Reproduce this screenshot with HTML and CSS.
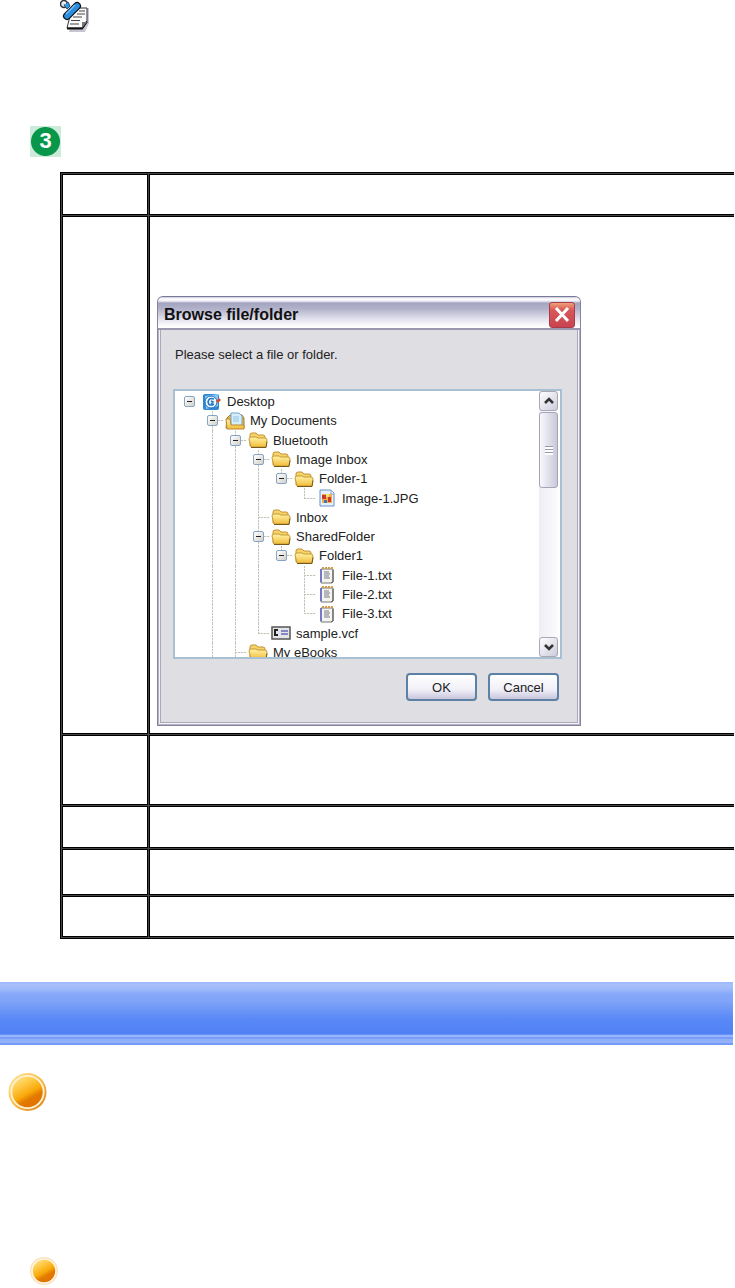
FILE: index.html
```
<!DOCTYPE html>
<html lang="en">
<head>
  <meta charset="UTF-8">
  <meta name="viewport" content="width=device-width, initial-scale=1.0">
  <title>Browse file/folder</title>
  <link rel="stylesheet" href="styles.css">
</head>
<body>
  <!-- shared tree icons -->
  <svg class="defs" width="0" height="0" aria-hidden="true">
    <defs>
      <linearGradient id="gold" x1="0" y1="0" x2="0" y2="1">
        <stop offset="0" stop-color="#fff3a8"/><stop offset="1" stop-color="#f1bd3a"/>
      </linearGradient>
      <linearGradient id="orb" x1="0.2" y1="0" x2="0.75" y2="1">
        <stop offset="0" stop-color="#ffe48c"/><stop offset="0.25" stop-color="#ffcc4c"/><stop offset="0.55" stop-color="#f9a90a"/><stop offset="0.7" stop-color="#e37a00"/><stop offset="1" stop-color="#dd7000"/>
      </linearGradient>
      <linearGradient id="rim" x1="0" y1="0" x2="1" y2="1">
        <stop offset="0" stop-color="#ffe8a0"/><stop offset="0.5" stop-color="#f8bd45"/><stop offset="1" stop-color="#d97a18"/>
      </linearGradient>
      <symbol id="folder" viewBox="0 0 20 18">
        <path d="M2 15V4q0-2 2-2h4l2 2h5q2 0 2 2v9z" fill="#f5d36a" stroke="#c39332"/>
        <path d="M3 16L1 8q0-2 2-2h5l2 1h7q2 0 2 2l-1 7z" fill="url(#gold)" stroke="#c99a35"/>
        <path d="M3 16.500h15l1-6" fill="none" stroke="#77591d"/>
      </symbol>
      <symbol id="text-file" viewBox="0 0 20 18">
        <path d="M4 3h12v13l-2 1H4z" fill="#f5f5f0" stroke="#777"/>
        <path d="M4 3v13" stroke="#7777c8" stroke-width="2"/>
        <path d="M5 2h11" stroke="#d49b48" stroke-width="2" stroke-dasharray="2 1"/>
        <path d="M7 6h5M7 8h6M7 10h5M7 12h6" stroke="#77798b"/>
        <path d="M16 4v12l-2 1" fill="none" stroke="#555"/>
      </symbol>
    </defs>
  </svg>

  <main class="page">
    <svg class="note-icon" viewBox="0 0 32 34" aria-hidden="true">
      <path d="M9 32l3-15 13-9h4v15l-4 9z" fill="#c6c5d2"/>
      <path d="M7 28l3-12L20 8h7v13l-4 7z" fill="#fafafa" stroke="#333"/>
      <path d="M19 11h6M17 14h8M13 17h9M11 20.500h9M10 24h9" stroke="#444" stroke-width="1.200"/>
      <path d="M7 28.500h15l5-7" fill="none" stroke="#111" stroke-width="2"/>
      <path d="M22 28v-6h5z" fill="#777"/>
      <path d="M7 16L17 6" stroke="#111" stroke-width="8" stroke-linecap="round"/>
      <path d="M7 16L17 6" stroke="#298de0" stroke-width="5.500" stroke-linecap="round"/>
      <path d="M6 14L15 5" stroke="#79c2fb" stroke-width="1.500"/>
      <circle cx="4" cy="4" r="3.500" fill="#d9e7f4" stroke="#333" stroke-width="1.500"/>
      <path d="M4 5l4-3 2 4-3 3z" fill="#3298e7" stroke="#244b72"/>
      <path d="M3 1l3 2-1 2z" fill="#fff"/>
    </svg>

    <div class="step">3</div>

    <table class="steps">
      <tr class="row-head"><td class="number"></td><td></td></tr>
      <tr class="row-dialog">
        <td class="number"></td>
        <td class="shot">
          <section class="dialog">
            <header class="titlebar">
              <h1>Browse file/folder</h1>
              <button class="close" type="button" aria-label="Close">
                <svg viewBox="0 0 24 24"><path d="M6 5l12 13M18 5L6 18" stroke="#fff" stroke-width="3"/></svg>
              </button>
            </header>
            <div class="dialog-body">
              <p>Please select a file or folder.</p>
              <div class="browser">
                <ul class="tree">
                  <li class="root"><span class="guide"><button class="toggle" type="button" aria-label="Collapse Desktop"></button></span>
                    <svg class="icon" viewBox="0 0 20 18"><rect x="1" y="1" width="16" height="16" rx="2" fill="#3186d4"/><path d="M3 3l13-2v12L4 16z" fill="#8bc7f3"/><circle cx="9" cy="9" r="6" fill="#e8f6ff" stroke="#2370b8"/><path d="M12 6q-5-2-6 3 1 5 6 2M9 8l2 1-2 2" fill="none" stroke="#2373bd" stroke-width="1.500"/><path d="M14 8l3-3 2 2-3 3z" fill="#d34e31"/></svg>Desktop</li>
                  <li><span class="guide tee"><button class="toggle" type="button" aria-label="Collapse My Documents"></button></span>
                    <svg class="icon" viewBox="0 0 20 18"><path d="M2 6l3-3h12l2 3v10H1z" fill="#e7b649" stroke="#ad792c"/><path d="M6 1h8l3 3v10H6z" fill="#d6eefc" stroke="#71a7ce"/><path d="M8 5h6M8 7h6M8 9h6" stroke="#91c5e7"/><path d="M1 7h4l1 6h13v4H2z" fill="url(#gold)" stroke="#bd8834"/></svg>My Documents</li>
                  <li><span class="guide line"></span><span class="guide tee"><button class="toggle" type="button" aria-label="Collapse Bluetooth"></button></span>
                    <svg class="icon"><use href="#folder"/></svg>Bluetooth</li>
                  <li><span class="guide line"></span><span class="guide line"></span><span class="guide tee"><button class="toggle" type="button" aria-label="Collapse Image Inbox"></button></span>
                    <svg class="icon"><use href="#folder"/></svg>Image Inbox</li>
                  <li><span class="guide line"></span><span class="guide line"></span><span class="guide line"></span><span class="guide elbow"><button class="toggle" type="button" aria-label="Collapse Folder-1"></button></span>
                    <svg class="icon"><use href="#folder"/></svg>Folder-1</li>
                  <li><span class="guide line"></span><span class="guide line"></span><span class="guide line"></span><span class="guide"></span><span class="guide elbow"></span>
                    <svg class="icon" viewBox="0 0 20 18"><path d="M3 1h11l3 3v13H3z" fill="#e5f0ff" stroke="#6a91c7"/><path d="M14 1v4h3" fill="#fff" stroke="#88a4ce"/><path d="M5 5h10v9H5z" fill="#f7ad47"/><path d="M5 6h4v4H5zM11 8h3v5h-3z" fill="#c93828"/><path d="M9 5h3v3H9z" fill="#fae283"/><path d="M7 11h3v3H7z" fill="#347bb9"/></svg>Image-1.JPG</li>
                  <li><span class="guide line"></span><span class="guide line"></span><span class="guide tee"></span>
                    <svg class="icon"><use href="#folder"/></svg>Inbox</li>
                  <li><span class="guide line"></span><span class="guide line"></span><span class="guide tee"><button class="toggle" type="button" aria-label="Collapse SharedFolder"></button></span>
                    <svg class="icon"><use href="#folder"/></svg>SharedFolder</li>
                  <li><span class="guide line"></span><span class="guide line"></span><span class="guide line"></span><span class="guide elbow"><button class="toggle" type="button" aria-label="Collapse Folder1"></button></span>
                    <svg class="icon"><use href="#folder"/></svg>Folder1</li>
                  <li><span class="guide line"></span><span class="guide line"></span><span class="guide line"></span><span class="guide"></span><span class="guide tee"></span>
                    <svg class="icon"><use href="#text-file"/></svg>File-1.txt</li>
                  <li><span class="guide line"></span><span class="guide line"></span><span class="guide line"></span><span class="guide"></span><span class="guide tee"></span>
                    <svg class="icon"><use href="#text-file"/></svg>File-2.txt</li>
                  <li><span class="guide line"></span><span class="guide line"></span><span class="guide line"></span><span class="guide"></span><span class="guide elbow"></span>
                    <svg class="icon"><use href="#text-file"/></svg>File-3.txt</li>
                  <li><span class="guide line"></span><span class="guide line"></span><span class="guide elbow"></span>
                    <svg class="icon" viewBox="0 0 20 18"><path d="M1 3h18v12H1z" fill="#e5e5e8" stroke="#555" stroke-width="1.500"/><path d="M7 6H4v5h3" fill="none" stroke="#222" stroke-width="2"/><path d="M10 7h7M10 10h7" stroke="#6868bd" stroke-width="1.500"/></svg>sample.vcf</li>
                  <li><span class="guide line"></span><span class="guide tee"></span>
                    <svg class="icon"><use href="#folder"/></svg>My eBooks</li>
                </ul>
                <div class="scrollbar">
                  <button class="arrow" type="button" aria-label="Scroll up"><svg viewBox="0 0 12 8"><path d="M2 6l4-4 4 4" fill="none" stroke="#333" stroke-width="2.500"/></svg></button>
                  <div class="thumb"></div>
                  <button class="arrow down" type="button" aria-label="Scroll down"><svg viewBox="0 0 12 8"><path d="M2 2l4 4 4-4" fill="none" stroke="#333" stroke-width="2.500"/></svg></button>
                </div>
              </div>
              <div class="actions">
                <button type="button">OK</button>
                <button type="button">Cancel</button>
              </div>
            </div>
          </section>
        </td>
      </tr>
      <tr class="row-tall"><td class="number"></td><td></td></tr>
      <tr class="row-short"><td class="number"></td><td></td></tr>
      <tr class="row-medium"><td class="number"></td><td></td></tr>
      <tr class="row-head"><td class="number"></td><td></td></tr>
    </table>

    <div class="banner"></div>

    <svg class="bullet large" viewBox="0 0 40 40" aria-hidden="true"><circle cx="20" cy="20" r="20" fill="url(#rim)"/><circle cx="20" cy="20" r="17" fill="url(#orb)" stroke="#fff0d0" stroke-width="2"/></svg>
    <svg class="bullet small" viewBox="0 0 40 40" aria-hidden="true"><circle cx="20" cy="20" r="20" fill="#fbe2bd"/><circle cx="20" cy="20" r="17" fill="url(#orb)" stroke="#fff7e8" stroke-width="2"/></svg>
  </main>
</body>
</html>
```

FILE: styles.css
```
* {
  box-sizing: border-box;
}

body {
  margin: 0;
  background: #fff;
  color: #222;
  font-family: "Liberation Sans", Arial, sans-serif;
  font-size: 13px;
}

button {
  padding: 0;
  font-family: inherit;
}

svg {
  display: block;
}

.defs {
  position: absolute;
}

.page {
  padding-bottom: 3px;
  overflow: hidden;
}

.note-icon {
  width: 32px;
  height: 34px;
  margin-left: 60px;
}

.step {
  width: 31px;
  height: 31px;
  margin: 92px 0 15px 30px;
  background: radial-gradient(circle, #08964b 14px, #cdebda 15px);
  color: #fff;
  font-size: 22px;
  font-weight: bold;
  line-height: 30px;
  text-align: center;
}

/* steps table, open on the right side */
.steps {
  width: calc(100% - 60px);
  margin-left: 60px;
  border: 1px solid #000;
  border-right: 0;
  border-spacing: 1px;
  background: #444;
  table-layout: fixed;
  clip-path: inset(0 1px 0 0);
}

.steps td {
  padding: 0;
  border: 1px solid #000;
  background: #fff;
  vertical-align: top;
}

.steps td:last-child {
  border-right: 0;
}

.steps .number {
  width: 86px;
}

.row-head {
  height: 41px;
}

.row-dialog {
  height: 518px;
}

.row-tall {
  height: 70px;
}

.row-short {
  height: 42px;
}

.row-medium {
  height: 46px;
}

.steps .shot {
  padding: 79px 7px 7px;
}

/* dialog */
.dialog {
  display: flex;
  flex-direction: column;
  max-width: 424px;
  height: 430px;
  border: 1px solid #85849b;
  border-top-color: #777a98;
  border-radius: 6px 6px 0 0;
  background: #dfdee3;
  box-shadow: inset 0 0 0 1px #b3b2c4, inset 0 0 0 2px #f4f4f8, inset 0 0 0 3px #aaa9bb;
}

.titlebar {
  display: flex;
  flex: none;
  align-items: center;
  justify-content: space-between;
  height: 33px;
  padding: 4px 5px 0 6px;
  border-bottom: 2px solid #9998b0;
  border-radius: 5px 5px 0 0;
  background: linear-gradient(#c9c8dc 0, #fff 2px, #eeeef6 4px, #a5a4c0 6px, #b3b2cb 12px, #e2e1ed 22px, #fff 30px);
}

.titlebar h1 {
  margin: 0;
  color: #111;
  font-size: 16px;
  line-height: 20px;
}

.close {
  width: 26px;
  height: 26px;
  border: 1px solid #aa3c48;
  border-radius: 3px;
  background: linear-gradient(#f1a077, #d85858 7px, #c94350);
}

.dialog-body {
  display: flex;
  flex: 1;
  flex-direction: column;
  padding: 17px 18px 0 15px;
}

.dialog-body p {
  margin: 0 0 26px;
  padding-left: 2px;
  line-height: 16px;
}

.browser {
  display: flex;
  height: 270px;
  padding-right: 2px;
  overflow: hidden;
  border: 2px solid #a9bfd2;
  background: #fff;
}

/* folder tree */
.tree {
  display: grid;
  flex: 1;
  grid-template-rows: repeat(14, 1fr);
  height: 271px;
  margin: 0;
  padding: 1px 0 0 3px;
  list-style: none;
}

.tree li {
  display: flex;
  align-items: center;
  padding-left: 23px;
  white-space: nowrap;
}

.tree .root {
  padding-left: 0;
}

.icon {
  width: 20px;
  height: 18px;
  margin: 0 5px 0 1px;
}

.guide {
  display: flex;
  align-items: center;
  justify-content: center;
  align-self: stretch;
  width: 23px;
  background-repeat: no-repeat;
}

.line {
  background-image: repeating-linear-gradient(#c4c3b8 0 2px, #f2f2ed 2px 3px);
  background-position: 11px 0;
  background-size: 1px 100%;
}

.tee,
.elbow {
  background-image: repeating-linear-gradient(#c4c3b8 0 2px, #f2f2ed 2px 3px), repeating-linear-gradient(90deg, #c4c3b8 0 2px, #f2f2ed 2px 3px);
  background-position: 11px 0, 11px 50%;
  background-size: 1px 100%, 12px 1px;
}

.elbow {
  background-size: 1px 50%, 12px 1px;
}

.toggle {
  width: 11px;
  height: 11px;
  border: 1px solid #86a5c5;
  border-radius: 2px;
  background: linear-gradient(#222, #222) center / 5px 1px no-repeat, linear-gradient(135deg, #fff, #d2d0c9);
}

/* scrollbar */
.scrollbar {
  display: flex;
  flex-direction: column;
  width: 19px;
  background: linear-gradient(90deg, #ededf3, #fcfcff);
}

.arrow {
  display: grid;
  place-items: center;
  height: 20px;
  border: 1px solid #a8a8b7;
  border-radius: 3px;
  background: linear-gradient(135deg, #fff, #cccbdc);
}

.arrow svg {
  width: 12px;
  height: 8px;
}

.down {
  margin-top: auto;
}

.thumb {
  height: 76px;
  margin-top: 1px;
  border: 1px solid #a5a4b8;
  border-radius: 3px;
  background: repeating-linear-gradient(#9998ad 0 1px, #fff 1px 3px) center / 8px 9px no-repeat, linear-gradient(90deg, #f8f8fc, #c9c8da);
}

.actions {
  display: flex;
  justify-content: flex-end;
  gap: 11px;
  padding: 14px 3px 0 0;
}

.actions button {
  width: 71px;
  height: 28px;
  border: 2px solid #5d81a5;
  border-radius: 4px;
  background: linear-gradient(#fff, #f1f0f8 60%, #c8c6dc);
  color: #222;
  font-size: 13px;
}

.banner {
  height: 63px;
  margin: 43px 2px 28px 0;
  background: linear-gradient(#9db7fb 0, #a9c0fb 3px, #9bb7fa 8px, #86a8f9 12px, #82a5f9 18px, #7099f7 26px, #5b89f6 36px, #5082f5 52px, #7d9ff8 53px, #b7cafc 54px, #799ef8 55px, #7a9df8 57px, #a8bffb 58px, #799df8 59px, #b2c6fb 60px, #779cf8 61px, #719af7 63px);
}

.large {
  width: 39px;
  height: 38px;
  margin-left: 8px;
}

.small {
  width: 28px;
  height: 28px;
  margin: 146px 0 0 30px;
}
```
